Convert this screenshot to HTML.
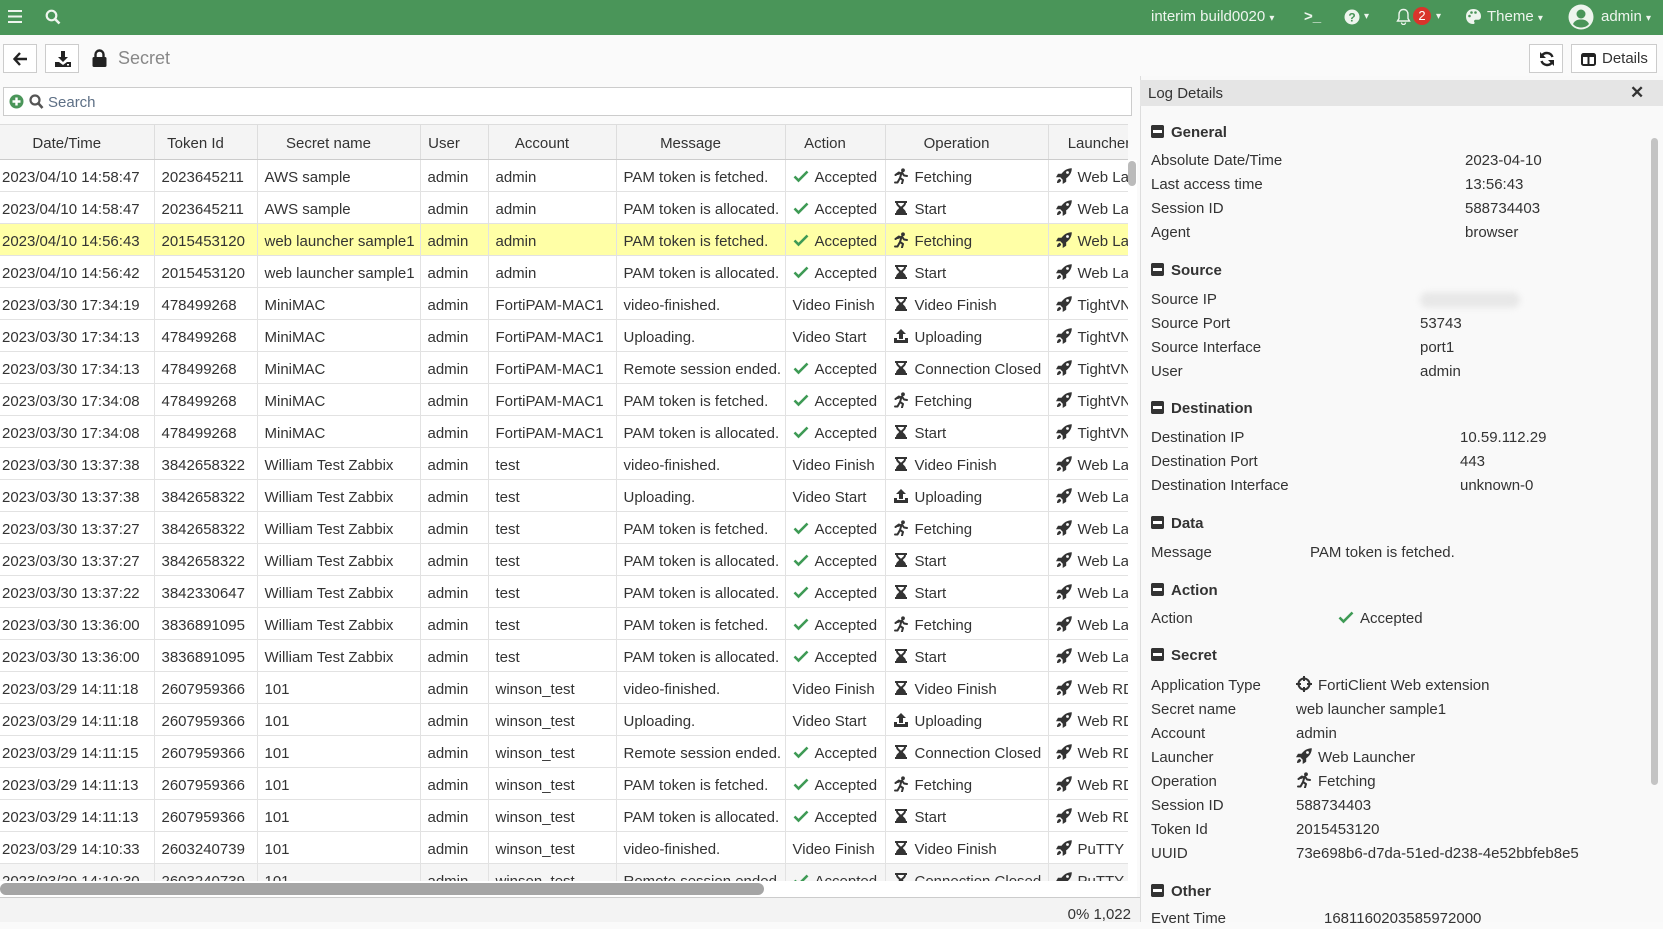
<!DOCTYPE html>
<html><head><meta charset="utf-8"><style>
*{box-sizing:border-box;margin:0;padding:0}
body{width:1663px;height:922px;overflow:hidden;background:#fafafa;font-family:"Liberation Sans",sans-serif;color:#333;font-size:15px;position:relative}
.abs{position:absolute}
#nav{left:0;top:0;width:1663px;height:35px;background:#4a9559;color:#eef5ee}
#nav .t{position:absolute;top:8px;font-size:15px;white-space:nowrap}
.btn{position:absolute;background:#fff;border:1px solid #ccc;height:29px}
#search{left:3px;top:87px;width:1129px;height:29px;background:#fff;border:1px solid #ccc}
#tw{left:0;top:124px;width:1128px;height:757px;overflow:hidden;background:#fff}
table{border-collapse:collapse;table-layout:fixed;width:1170px}
th{height:35px;font-weight:normal;text-align:center;padding-right:20px;padding-top:2px;background:#f4f4f4;border-right:1px solid #ddd;border-bottom:1px solid #ccc;border-top:1px solid #ddd;font-size:15px;color:#333}
td{height:32px;border-right:1px solid #e2e2e2;border-bottom:1px solid #e2e2e2;padding:3px 7px 0;white-space:nowrap;overflow:hidden;font-size:15px}
td:first-child{padding-left:2px}
tr.h td{background:#ffffa6}
tr.g td{background:#f5f5f5}
svg.i{width:16px;height:16px;vertical-align:-2px;margin-right:6px}
#det{left:1140px;top:76px;width:523px;height:846px;background:#f9f9f9;border-left:1px solid #ddd}
#dh{left:1140px;top:80px;width:523px;height:26px;background:#e5e5e5}
.dl{position:absolute;left:1151px;font-size:15px;line-height:20px;white-space:nowrap}
.dv{position:absolute;font-size:15px;line-height:20px;white-space:nowrap}
.sh{position:absolute;left:1151px;font-size:15px;font-weight:bold;line-height:20px}
.sh:before{content:"";display:inline-block;width:13px;height:13px;border-radius:2px;margin-right:7px;vertical-align:-1px;background:linear-gradient(#333 5px,#fff 5px,#fff 8px,#333 8px);box-shadow:inset 2px 0 0 #333,inset -2px 0 0 #333}
</style></head><body>
<svg width="0" height="0" style="position:absolute">
<symbol id="chk" viewBox="0 0 16 16"><path d="M1.5 8.5l4 4 9-9" fill="none" stroke="#3e9a55" stroke-width="2.6"/></symbol>
<symbol id="run" viewBox="0 0 16 16"><circle cx="10" cy="2.3" r="1.9" fill="#333"/><path d="M5 6l4-1.5 2 3 3 .5M8.5 5l-1.5 5 3 2-1 3.5M7 10l-2.5 4.5H2M6 4.5L2.5 7" fill="none" stroke="#333" stroke-width="2" stroke-linecap="round" stroke-linejoin="round"/></symbol>
<symbol id="hg" viewBox="0 0 16 16"><path d="M2 1h12v2h-1c0 3-3 4-3 5s3 2 3 5h1v2H2v-2h1c0-3 3-4 3-5S3 6 3 3H2z" fill="#333"/><path d="M5 3h6c0 2-3 3-3 4C8 6 5 5 5 3z" fill="#fff"/></symbol>
<symbol id="rk" viewBox="0 0 16 16"><path d="M15.8.2C11 .2 7.5 2.8 5.5 5.8H2L0 9.3h4.3l2.4 2.4V16l3.5-2.2V10.2C13.2 8.2 15.8 5 15.8.2z" fill="#333"/><path d="M3.8 10.8C2 11.3 1 13 1 15c2 0 3.7-1 4.2-2.8z" fill="#333"/><circle cx="11.5" cy="4.5" r="1.4" fill="#fff"/></symbol>
<symbol id="up" viewBox="0 0 16 16"><path d="M8 1l5 5H10v5H6V6H3z" fill="#333"/><path d="M1 10h3v2h8v-2h3v5H1z" fill="#333"/></symbol>
</svg>

<div id="nav" class="abs">
 <svg class="abs" style="left:8px;top:10px" width="14" height="13"><rect y="0" width="14" height="2" fill="#eef5ee"/><rect y="5.5" width="14" height="2" fill="#eef5ee"/><rect y="11" width="14" height="2" fill="#eef5ee"/></svg>
 <svg class="abs" style="left:45px;top:9px" width="16" height="16"><circle cx="6.5" cy="6.5" r="4.8" fill="none" stroke="#eef5ee" stroke-width="2.2"/><path d="M10 10l4.5 4.5" stroke="#eef5ee" stroke-width="2.6"/></svg>
 <span class="t" style="left:1151px">interim build0020 <span style="font-size:10px">▾</span></span>
 <span class="t" style="left:1304px;font-weight:bold">&gt;_</span>
 <svg class="abs" style="left:1344px;top:9px" width="16" height="16"><circle cx="8" cy="8" r="7.5" fill="#eef5ee"/><text x="8" y="12.5" font-size="12" font-weight="bold" text-anchor="middle" fill="#4a9559" font-family="Liberation Sans">?</text></svg>
 <span class="t" style="left:1364px;font-size:10px;top:11px">▾</span>
 <svg class="abs" style="left:1396px;top:8px" width="15" height="17"><path d="M7.5 1.5c-3 0-4.5 2.3-4.5 5v4L1.5 13h12L12 10.5v-4c0-2.7-1.5-5-4.5-5z" fill="none" stroke="#eef5ee" stroke-width="1.4"/><path d="M5.5 14.5a2 2 0 004 0" fill="none" stroke="#eef5ee" stroke-width="1.4"/></svg>
 <div class="abs" style="left:1413px;top:7px;width:18px;height:18px;border-radius:9px;background:#d9342b;color:#fff;font-size:13px;text-align:center;line-height:18px">2</div>
 <span class="t" style="left:1436px;font-size:10px;top:11px">▾</span>
 <svg class="abs" style="left:1465px;top:8px" width="17" height="17"><path d="M8.5 1C4 1 1 4 1 8.5S4 16 8 16c1.5 0 2-1 1.3-2-.7-1 0-2.3 1.5-2.3H13c2 0 3-1.3 3-3.5C16 4 12.5 1 8.5 1z" fill="#eef5ee"/><circle cx="4.5" cy="8" r="1.3" fill="#4a9559"/><circle cx="6.5" cy="4.5" r="1.3" fill="#4a9559"/><circle cx="10.5" cy="4.5" r="1.3" fill="#4a9559"/></svg>
 <span class="t" style="left:1487px">Theme <span style="font-size:10px">▾</span></span>
 <svg class="abs" style="left:1568px;top:4px" width="26" height="26"><circle cx="13" cy="13" r="12.5" fill="#eef5ee"/><circle cx="13" cy="10" r="4.5" fill="#4a9559"/><path d="M5 20c2-4 5-4.5 8-4.5s6 .5 8 4.5c-2 2.5-5 3.5-8 3.5S7 22.5 5 20z" fill="#4a9559"/></svg>
 <span class="t" style="left:1601px">admin <span style="font-size:10px">▾</span></span>
</div>

<div class="btn" style="left:3px;top:44px;width:34px"><svg style="position:absolute;left:9px;top:7px" width="15" height="14"><path d="M7 1L1.5 7 7 13M1.5 7H14" fill="none" stroke="#222" stroke-width="2.4"/></svg></div>
<div class="btn" style="left:45px;top:44px;width:34px"><svg style="position:absolute;left:9px;top:6px" width="16" height="16"><path d="M6 0h4v6h3L8 11 3 6h3z" fill="#222"/><path d="M0 11h4l4 3 4-3h4v5H0z" fill="#222"/><rect x="12" y="13" width="2" height="1.5" fill="#fff"/></svg></div>
<svg class="abs" style="left:92px;top:49px" width="15" height="18"><path d="M3.5 8V5.5a4 4 0 018 0V8" fill="none" stroke="#222" stroke-width="2.4"/><rect x="0.5" y="8" width="14" height="10" rx="1.5" fill="#222"/></svg>
<div class="abs" style="left:118px;top:48px;font-size:18px;color:#888">Secret</div>
<div class="btn" style="left:1529px;top:44px;width:34px"><svg style="position:absolute;left:9px;top:6px" width="16" height="16"><path d="M13.5 6A6 6 0 003 4.5M2.5 10A6 6 0 0013 11.5" fill="none" stroke="#222" stroke-width="2.4"/><path d="M1 1v6h6z" fill="#222"/><path d="M15 15V9H9z" fill="#222"/></svg></div>
<div class="btn" style="left:1571px;top:44px;width:86px"><svg style="position:absolute;left:9px;top:8px" width="15" height="13"><rect x="1" y="1" width="13" height="11" rx="1.5" fill="none" stroke="#222" stroke-width="2"/><rect x="1" y="1" width="13" height="3" fill="#222"/><rect x="6.5" y="1" width="2" height="11" fill="#222"/></svg><span style="position:absolute;left:30px;top:5px;font-size:15px">Details</span></div>

<div id="search" class="abs">
 <svg style="position:absolute;left:5px;top:6px" width="15" height="15"><circle cx="7.5" cy="7.5" r="7" fill="#4a9559"/><path d="M7.5 3.5v8M3.5 7.5h8" stroke="#fff" stroke-width="2.4"/></svg>
 <svg style="position:absolute;left:25px;top:6px" width="15" height="16"><circle cx="6" cy="6" r="4.5" fill="none" stroke="#555" stroke-width="2.2"/><path d="M9.5 9.5l4 4.5" stroke="#555" stroke-width="2.6"/></svg>
 <span style="position:absolute;left:44px;top:6px;font-size:15px;color:#5d6f85">Search</span>
</div>

<div id="tw" class="abs">
<table>
<colgroup><col style="width:154px"><col style="width:103px"><col style="width:163px"><col style="width:68px"><col style="width:128px"><col style="width:169px"><col style="width:100px"><col style="width:163px"><col style="width:122px"></colgroup>
<tr><th>Date/Time</th><th>Token Id</th><th>Secret name</th><th>User</th><th>Account</th><th>Message</th><th>Action</th><th>Operation</th><th>Launcher</th></tr>
<tr><td>2023/04/10 14:58:47</td><td>2023645211</td><td>AWS sample</td><td>admin</td><td>admin</td><td>PAM token is fetched.</td><td><svg class="i"><use href="#chk"/></svg>Accepted</td><td><svg class="i"><use href="#run"/></svg>Fetching</td><td><svg class="i"><use href="#rk"/></svg>Web Launcher</td></tr>
<tr><td>2023/04/10 14:58:47</td><td>2023645211</td><td>AWS sample</td><td>admin</td><td>admin</td><td>PAM token is allocated.</td><td><svg class="i"><use href="#chk"/></svg>Accepted</td><td><svg class="i"><use href="#hg"/></svg>Start</td><td><svg class="i"><use href="#rk"/></svg>Web Launcher</td></tr>
<tr class="h"><td>2023/04/10 14:56:43</td><td>2015453120</td><td>web launcher sample1</td><td>admin</td><td>admin</td><td>PAM token is fetched.</td><td><svg class="i"><use href="#chk"/></svg>Accepted</td><td><svg class="i"><use href="#run"/></svg>Fetching</td><td><svg class="i"><use href="#rk"/></svg>Web Launcher</td></tr>
<tr><td>2023/04/10 14:56:42</td><td>2015453120</td><td>web launcher sample1</td><td>admin</td><td>admin</td><td>PAM token is allocated.</td><td><svg class="i"><use href="#chk"/></svg>Accepted</td><td><svg class="i"><use href="#hg"/></svg>Start</td><td><svg class="i"><use href="#rk"/></svg>Web Launcher</td></tr>
<tr><td>2023/03/30 17:34:19</td><td>478499268</td><td>MiniMAC</td><td>admin</td><td>FortiPAM-MAC1</td><td>video-finished.</td><td>Video Finish</td><td><svg class="i"><use href="#hg"/></svg>Video Finish</td><td><svg class="i"><use href="#rk"/></svg>TightVNC</td></tr>
<tr><td>2023/03/30 17:34:13</td><td>478499268</td><td>MiniMAC</td><td>admin</td><td>FortiPAM-MAC1</td><td>Uploading.</td><td>Video Start</td><td><svg class="i"><use href="#up"/></svg>Uploading</td><td><svg class="i"><use href="#rk"/></svg>TightVNC</td></tr>
<tr><td>2023/03/30 17:34:13</td><td>478499268</td><td>MiniMAC</td><td>admin</td><td>FortiPAM-MAC1</td><td>Remote session ended.</td><td><svg class="i"><use href="#chk"/></svg>Accepted</td><td><svg class="i"><use href="#hg"/></svg>Connection Closed</td><td><svg class="i"><use href="#rk"/></svg>TightVNC</td></tr>
<tr><td>2023/03/30 17:34:08</td><td>478499268</td><td>MiniMAC</td><td>admin</td><td>FortiPAM-MAC1</td><td>PAM token is fetched.</td><td><svg class="i"><use href="#chk"/></svg>Accepted</td><td><svg class="i"><use href="#run"/></svg>Fetching</td><td><svg class="i"><use href="#rk"/></svg>TightVNC</td></tr>
<tr><td>2023/03/30 17:34:08</td><td>478499268</td><td>MiniMAC</td><td>admin</td><td>FortiPAM-MAC1</td><td>PAM token is allocated.</td><td><svg class="i"><use href="#chk"/></svg>Accepted</td><td><svg class="i"><use href="#hg"/></svg>Start</td><td><svg class="i"><use href="#rk"/></svg>TightVNC</td></tr>
<tr><td>2023/03/30 13:37:38</td><td>3842658322</td><td>William Test Zabbix</td><td>admin</td><td>test</td><td>video-finished.</td><td>Video Finish</td><td><svg class="i"><use href="#hg"/></svg>Video Finish</td><td><svg class="i"><use href="#rk"/></svg>Web Launcher</td></tr>
<tr><td>2023/03/30 13:37:38</td><td>3842658322</td><td>William Test Zabbix</td><td>admin</td><td>test</td><td>Uploading.</td><td>Video Start</td><td><svg class="i"><use href="#up"/></svg>Uploading</td><td><svg class="i"><use href="#rk"/></svg>Web Launcher</td></tr>
<tr><td>2023/03/30 13:37:27</td><td>3842658322</td><td>William Test Zabbix</td><td>admin</td><td>test</td><td>PAM token is fetched.</td><td><svg class="i"><use href="#chk"/></svg>Accepted</td><td><svg class="i"><use href="#run"/></svg>Fetching</td><td><svg class="i"><use href="#rk"/></svg>Web Launcher</td></tr>
<tr><td>2023/03/30 13:37:27</td><td>3842658322</td><td>William Test Zabbix</td><td>admin</td><td>test</td><td>PAM token is allocated.</td><td><svg class="i"><use href="#chk"/></svg>Accepted</td><td><svg class="i"><use href="#hg"/></svg>Start</td><td><svg class="i"><use href="#rk"/></svg>Web Launcher</td></tr>
<tr><td>2023/03/30 13:37:22</td><td>3842330647</td><td>William Test Zabbix</td><td>admin</td><td>test</td><td>PAM token is allocated.</td><td><svg class="i"><use href="#chk"/></svg>Accepted</td><td><svg class="i"><use href="#hg"/></svg>Start</td><td><svg class="i"><use href="#rk"/></svg>Web Launcher</td></tr>
<tr><td>2023/03/30 13:36:00</td><td>3836891095</td><td>William Test Zabbix</td><td>admin</td><td>test</td><td>PAM token is fetched.</td><td><svg class="i"><use href="#chk"/></svg>Accepted</td><td><svg class="i"><use href="#run"/></svg>Fetching</td><td><svg class="i"><use href="#rk"/></svg>Web Launcher</td></tr>
<tr><td>2023/03/30 13:36:00</td><td>3836891095</td><td>William Test Zabbix</td><td>admin</td><td>test</td><td>PAM token is allocated.</td><td><svg class="i"><use href="#chk"/></svg>Accepted</td><td><svg class="i"><use href="#hg"/></svg>Start</td><td><svg class="i"><use href="#rk"/></svg>Web Launcher</td></tr>
<tr><td>2023/03/29 14:11:18</td><td>2607959366</td><td>101</td><td>admin</td><td>winson_test</td><td>video-finished.</td><td>Video Finish</td><td><svg class="i"><use href="#hg"/></svg>Video Finish</td><td><svg class="i"><use href="#rk"/></svg>Web RDP</td></tr>
<tr><td>2023/03/29 14:11:18</td><td>2607959366</td><td>101</td><td>admin</td><td>winson_test</td><td>Uploading.</td><td>Video Start</td><td><svg class="i"><use href="#up"/></svg>Uploading</td><td><svg class="i"><use href="#rk"/></svg>Web RDP</td></tr>
<tr><td>2023/03/29 14:11:15</td><td>2607959366</td><td>101</td><td>admin</td><td>winson_test</td><td>Remote session ended.</td><td><svg class="i"><use href="#chk"/></svg>Accepted</td><td><svg class="i"><use href="#hg"/></svg>Connection Closed</td><td><svg class="i"><use href="#rk"/></svg>Web RDP</td></tr>
<tr><td>2023/03/29 14:11:13</td><td>2607959366</td><td>101</td><td>admin</td><td>winson_test</td><td>PAM token is fetched.</td><td><svg class="i"><use href="#chk"/></svg>Accepted</td><td><svg class="i"><use href="#run"/></svg>Fetching</td><td><svg class="i"><use href="#rk"/></svg>Web RDP</td></tr>
<tr><td>2023/03/29 14:11:13</td><td>2607959366</td><td>101</td><td>admin</td><td>winson_test</td><td>PAM token is allocated.</td><td><svg class="i"><use href="#chk"/></svg>Accepted</td><td><svg class="i"><use href="#hg"/></svg>Start</td><td><svg class="i"><use href="#rk"/></svg>Web RDP</td></tr>
<tr><td>2023/03/29 14:10:33</td><td>2603240739</td><td>101</td><td>admin</td><td>winson_test</td><td>video-finished.</td><td>Video Finish</td><td><svg class="i"><use href="#hg"/></svg>Video Finish</td><td><svg class="i"><use href="#rk"/></svg>PuTTY</td></tr>
<tr class="g"><td>2023/03/29 14:10:30</td><td>2603240739</td><td>101</td><td>admin</td><td>winson_test</td><td>Remote session ended.</td><td><svg class="i"><use href="#chk"/></svg>Accepted</td><td><svg class="i"><use href="#hg"/></svg>Connection Closed</td><td><svg class="i"><use href="#rk"/></svg>PuTTY</td></tr>
</table>
</div>
<div class="abs" style="left:1128px;top:160px;width:9px;height:721px;background:#fff"></div>
<div class="abs" style="left:1128px;top:161px;width:8px;height:25px;background:#bbb;border-radius:4px"></div>
<div class="abs" style="left:0;top:881px;width:1137px;height:16px;background:#fff"></div>
<div class="abs" style="left:0;top:883px;width:764px;height:12px;background:#a5a5a5;border-radius:6px"></div>
<div class="abs" style="left:0;top:897px;width:1140px;height:25px;background:#f3f3f3;border-top:1px solid #ccc"></div>
<div class="abs" style="left:1000px;top:906px;width:131px;text-align:right;font-size:15px;color:#333">0% 1,022</div>

<div id="det" class="abs"></div>
<div id="dh" class="abs"></div>
<div class="abs" style="left:1148px;top:85px;font-size:15px">Log Details</div>
<div class="abs" style="left:1630px;top:83px;font-size:17px;font-weight:bold">✕</div>
<div class="abs" style="left:1651px;top:138px;width:7px;height:647px;background:#c4c4c4;border-radius:4px"></div>

<div class="sh" style="top:123px">General</div>
<div class="dl" style="top:151px">Absolute Date/Time</div><div class="dv" style="left:1465px;top:151px">2023-04-10</div>
<div class="dl" style="top:175px">Last access time</div><div class="dv" style="left:1465px;top:175px">13:56:43</div>
<div class="dl" style="top:199px">Session ID</div><div class="dv" style="left:1465px;top:199px">588734403</div>
<div class="dl" style="top:223px">Agent</div><div class="dv" style="left:1465px;top:223px">browser</div>

<div class="sh" style="top:261px">Source</div>
<div class="dl" style="top:290px">Source IP</div><div class="abs" style="left:1420px;top:292px;width:100px;height:16px;background:#e8e8e8;border-radius:8px;filter:blur(3px)"></div>
<div class="dl" style="top:314px">Source Port</div><div class="dv" style="left:1420px;top:314px">53743</div>
<div class="dl" style="top:338px">Source Interface</div><div class="dv" style="left:1420px;top:338px">port1</div>
<div class="dl" style="top:362px">User</div><div class="dv" style="left:1420px;top:362px">admin</div>

<div class="sh" style="top:399px">Destination</div>
<div class="dl" style="top:428px">Destination IP</div><div class="dv" style="left:1460px;top:428px">10.59.112.29</div>
<div class="dl" style="top:452px">Destination Port</div><div class="dv" style="left:1460px;top:452px">443</div>
<div class="dl" style="top:476px">Destination Interface</div><div class="dv" style="left:1460px;top:476px">unknown-0</div>

<div class="sh" style="top:514px">Data</div>
<div class="dl" style="top:543px">Message</div><div class="dv" style="left:1310px;top:543px">PAM token is fetched.</div>

<div class="sh" style="top:581px">Action</div>
<div class="dl" style="top:609px">Action</div><div class="dv" style="left:1338px;top:609px"><svg class="i"><use href="#chk"/></svg>Accepted</div>

<div class="sh" style="top:646px">Secret</div>
<div class="dl" style="top:676px">Application Type</div><div class="dv" style="left:1296px;top:676px"><svg class="i" viewBox="0 0 16 16"><circle cx="8" cy="8" r="5.5" fill="none" stroke="#333" stroke-width="2"/><path d="M8 0v5M8 11v5M0 8h5M11 8h5" stroke="#333" stroke-width="2"/></svg>FortiClient Web extension</div>
<div class="dl" style="top:700px">Secret name</div><div class="dv" style="left:1296px;top:700px">web launcher sample1</div>
<div class="dl" style="top:724px">Account</div><div class="dv" style="left:1296px;top:724px">admin</div>
<div class="dl" style="top:748px">Launcher</div><div class="dv" style="left:1296px;top:748px"><svg class="i"><use href="#rk"/></svg>Web Launcher</div>
<div class="dl" style="top:772px">Operation</div><div class="dv" style="left:1296px;top:772px"><svg class="i"><use href="#run"/></svg>Fetching</div>
<div class="dl" style="top:796px">Session ID</div><div class="dv" style="left:1296px;top:796px">588734403</div>
<div class="dl" style="top:820px">Token Id</div><div class="dv" style="left:1296px;top:820px">2015453120</div>
<div class="dl" style="top:844px">UUID</div><div class="dv" style="left:1296px;top:844px">73e698b6-d7da-51ed-d238-4e52bbfeb8e5</div>

<div class="sh" style="top:882px">Other</div>
<div class="dl" style="top:909px">Event Time</div><div class="dv" style="left:1324px;top:909px">1681160203585972000</div>
</body></html>
